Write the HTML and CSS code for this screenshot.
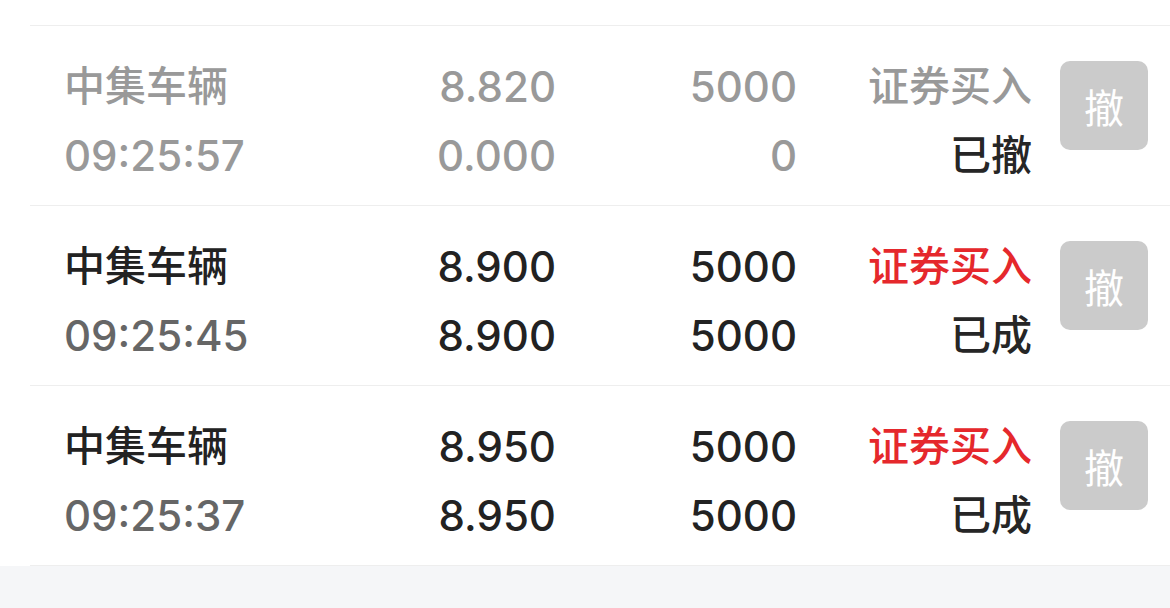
FILE: index.html
```html
<!DOCTYPE html>
<html lang="zh-CN">

<head>
    <meta charset="UTF-8">
    <meta name="viewport" content="width=device-width, initial-scale=1.0">
    <title>当日委托</title>
    <link rel="stylesheet" href="styles.css">
</head>

<body>
    <div class="order-list">
        <div class="order-row cancelled">
            <div class="cell name">中集车辆</div>
            <div class="cell num">8.820</div>
            <div class="cell num">5000</div>
            <div class="cell side">证券买入</div>
            <button class="cancel-btn">撤</button>
            <div class="cell time">09:25:57</div>
            <div class="cell num">0.000</div>
            <div class="cell num">0</div>
            <div class="cell state">已撤</div>
        </div>
        <div class="order-row">
            <div class="cell name">中集车辆</div>
            <div class="cell num">8.900</div>
            <div class="cell num">5000</div>
            <div class="cell side buy">证券买入</div>
            <button class="cancel-btn">撤</button>
            <div class="cell time">09:25:45</div>
            <div class="cell num">8.900</div>
            <div class="cell num">5000</div>
            <div class="cell state">已成</div>
        </div>
        <div class="order-row">
            <div class="cell name">中集车辆</div>
            <div class="cell num">8.950</div>
            <div class="cell num">5000</div>
            <div class="cell side buy">证券买入</div>
            <button class="cancel-btn">撤</button>
            <div class="cell time">09:25:37</div>
            <div class="cell num">8.950</div>
            <div class="cell num">5000</div>
            <div class="cell state">已成</div>
        </div>
    </div>
</body>

</html>
```

FILE: styles.css
```css
body {
    margin: 0;
    background-color: #f5f6f8;
    font-family: "Inter", "Noto Sans CJK SC", sans-serif;
    color: #222;
}

.order-list {
    background-color: #fff;
    padding-top: 25px;
}

.order-row {
    display: grid;
    grid-template-columns: 236px 256px 241px 235px 116px;
    grid-template-rows: 69px 69px;
    box-sizing: border-box;
    height: 180px;
    margin-left: 30px;
    padding: 26px 22px 0 34px;
    border-top: 1px solid #eee;
}

.order-row:last-child {
    border-bottom: 1px solid #eee;
    height: 181px;
}

.cell {
    font-size: 42px;
    font-weight: 500;
    line-height: 69px;
    white-space: nowrap;
}

.name,
.side,
.state {
    font-size: 41px;
}

.num,
.side,
.state {
    text-align: right;
}

.time {
    color: #666;
}

.side.buy {
    color: #e5282c;
}

.state {
    color: #262626;
}

.order-row.cancelled .name,
.order-row.cancelled .num,
.order-row.cancelled .side,
.order-row.cancelled .time {
    color: #999;
}

.cancel-btn {
    grid-row: 1 / span 2;
    grid-column: 5;
    justify-self: end;
    align-self: start;
    width: 88px;
    height: 89px;
    margin-top: 9px;
    padding: 0;
    border: none;
    border-radius: 10px;
    background-color: #cbcbcb;
    color: #fff;
    font-family: "Noto Sans CJK SC", sans-serif;
    font-size: 40px;
}
```
